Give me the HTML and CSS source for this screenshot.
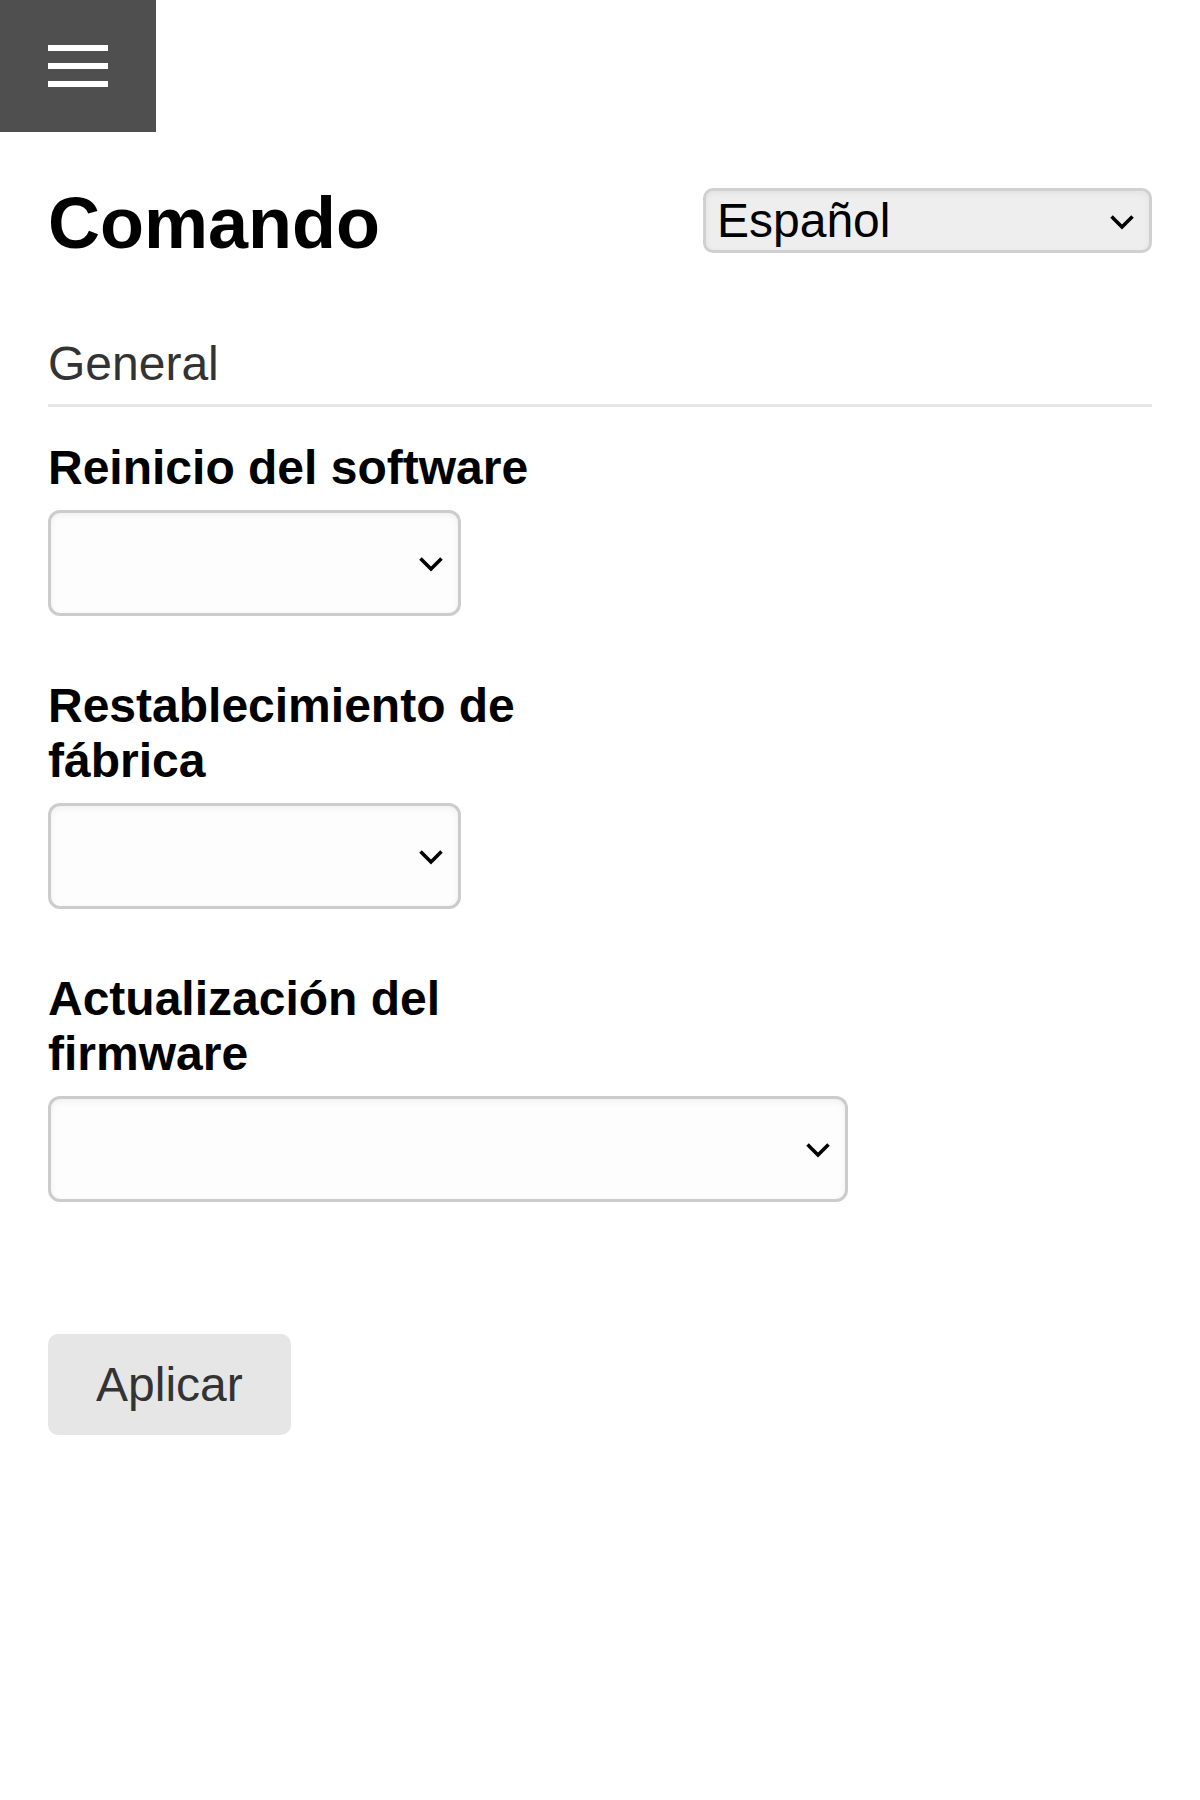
FILE: index.html
```html
<!DOCTYPE html>
<html lang="es">
<head>
<meta charset="utf-8">
<title>Comando</title>
<link rel="stylesheet" href="styles.css">
</head>
<body>
<header class="topbar">
  <button class="menu-btn" aria-label="Menú">
    <span class="bar"></span>
    <span class="bar"></span>
    <span class="bar"></span>
  </button>
</header>
<main class="page">
  <div class="title-row">
    <h1 class="title">Comando</h1>
    <div class="select-wrap lang-wrap">
      <select class="select lang"><option>Español</option></select>
      <svg class="chev" viewBox="0 0 24 15" aria-hidden="true"><polyline points="1.5,1.5 12,12 22.5,1.5"/></svg>
    </div>
  </div>

  <h2 class="section">General</h2>

  <div class="fields">
    <div class="field">
      <label class="label">Reinicio del software</label>
      <div class="select-wrap w-sm">
        <select class="select"><option></option></select>
        <svg class="chev" viewBox="0 0 24 15" aria-hidden="true"><polyline points="1.5,1.5 12,12 22.5,1.5"/></svg>
      </div>
    </div>
    <div class="field">
      <label class="label">Restablecimiento de fábrica</label>
      <div class="select-wrap w-sm">
        <select class="select"><option></option></select>
        <svg class="chev" viewBox="0 0 24 15" aria-hidden="true"><polyline points="1.5,1.5 12,12 22.5,1.5"/></svg>
      </div>
    </div>
    <div class="field">
      <label class="label">Actualización del firmware</label>
      <div class="select-wrap w-lg">
        <select class="select"><option></option></select>
        <svg class="chev" viewBox="0 0 24 15" aria-hidden="true"><polyline points="1.5,1.5 12,12 22.5,1.5"/></svg>
      </div>
    </div>
  </div>

  <button class="apply">Aplicar</button>
</main>
</body>
</html>
```

FILE: styles.css
```css
* { box-sizing: border-box; }

html, body {
  margin: 0;
  padding: 0;
  background: #ffffff;
}

body {
  font-family: "Liberation Sans", Arial, sans-serif;
  color: #000;
}

.topbar {
  display: flex;
}

.menu-btn {
  width: 156px;
  height: 132px;
  background: #4f4f4f;
  border: 0;
  padding: 0;
  margin: 0;
  display: flex;
  flex-direction: column;
  align-items: center;
  justify-content: center;
  gap: 12px;
  cursor: pointer;
}

.bar {
  display: block;
  width: 60px;
  height: 6px;
  background: #ffffff;
}

.page {
  padding: 0 48px;
}

.title-row {
  margin-top: 50px;
  display: flex;
  justify-content: space-between;
  align-items: flex-start;
}

.title {
  margin: 0;
  font-size: 72px;
  font-weight: bold;
  line-height: normal;
}

.select-wrap {
  position: relative;
}

.select {
  -webkit-appearance: none;
  appearance: none;
  display: block;
  width: 100%;
  height: 100%;
  margin: 0;
  font-family: "Liberation Sans", Arial, sans-serif;
  font-size: 48px;
  color: #000;
  background: #fdfdfd;
  border: 3px solid #cccccc;
  border-radius: 12px;
  box-shadow: inset 0 2px 6px rgba(0, 0, 0, 0.06);
  padding: 0 60px 0 11px;
  outline: none;
}

.lang-wrap {
  margin-top: 6px;
  width: 449px;
  height: 65px;
}

.lang {
  background: #eeeeee;
  border-color: #d0d0d0;
  border-radius: 10px;
}

.chev {
  position: absolute;
  right: 18px;
  top: 50%;
  width: 24px;
  height: 15px;
  margin-top: -6px;
  fill: none;
  stroke: #000;
  stroke-width: 3.6;
  pointer-events: none;
}

.section {
  margin: 72px 0 0 0;
  font-size: 48px;
  font-weight: normal;
  line-height: normal;
  color: #333333;
  padding-bottom: 13px;
  border-bottom: 3px solid #e6e6e6;
}

.fields {
  margin-top: 33px;
  display: flex;
  flex-direction: column;
  gap: 62px;
}

.field {
  display: flex;
  flex-direction: column;
}

.label {
  display: block;
  width: 50%;
  font-size: 48px;
  font-weight: bold;
  line-height: normal;
  margin-bottom: 15px;
}

.w-sm {
  width: 413px;
  height: 106px;
}

.w-lg {
  width: 800px;
  height: 106px;
}

.apply {
  margin-top: 132px;
  display: block;
  font-family: "Liberation Sans", Arial, sans-serif;
  font-size: 48px;
  line-height: normal;
  color: #333333;
  background: #e6e6e6;
  border: 0;
  border-radius: 10px;
  padding: 23px 48px;
  cursor: pointer;
}
```
